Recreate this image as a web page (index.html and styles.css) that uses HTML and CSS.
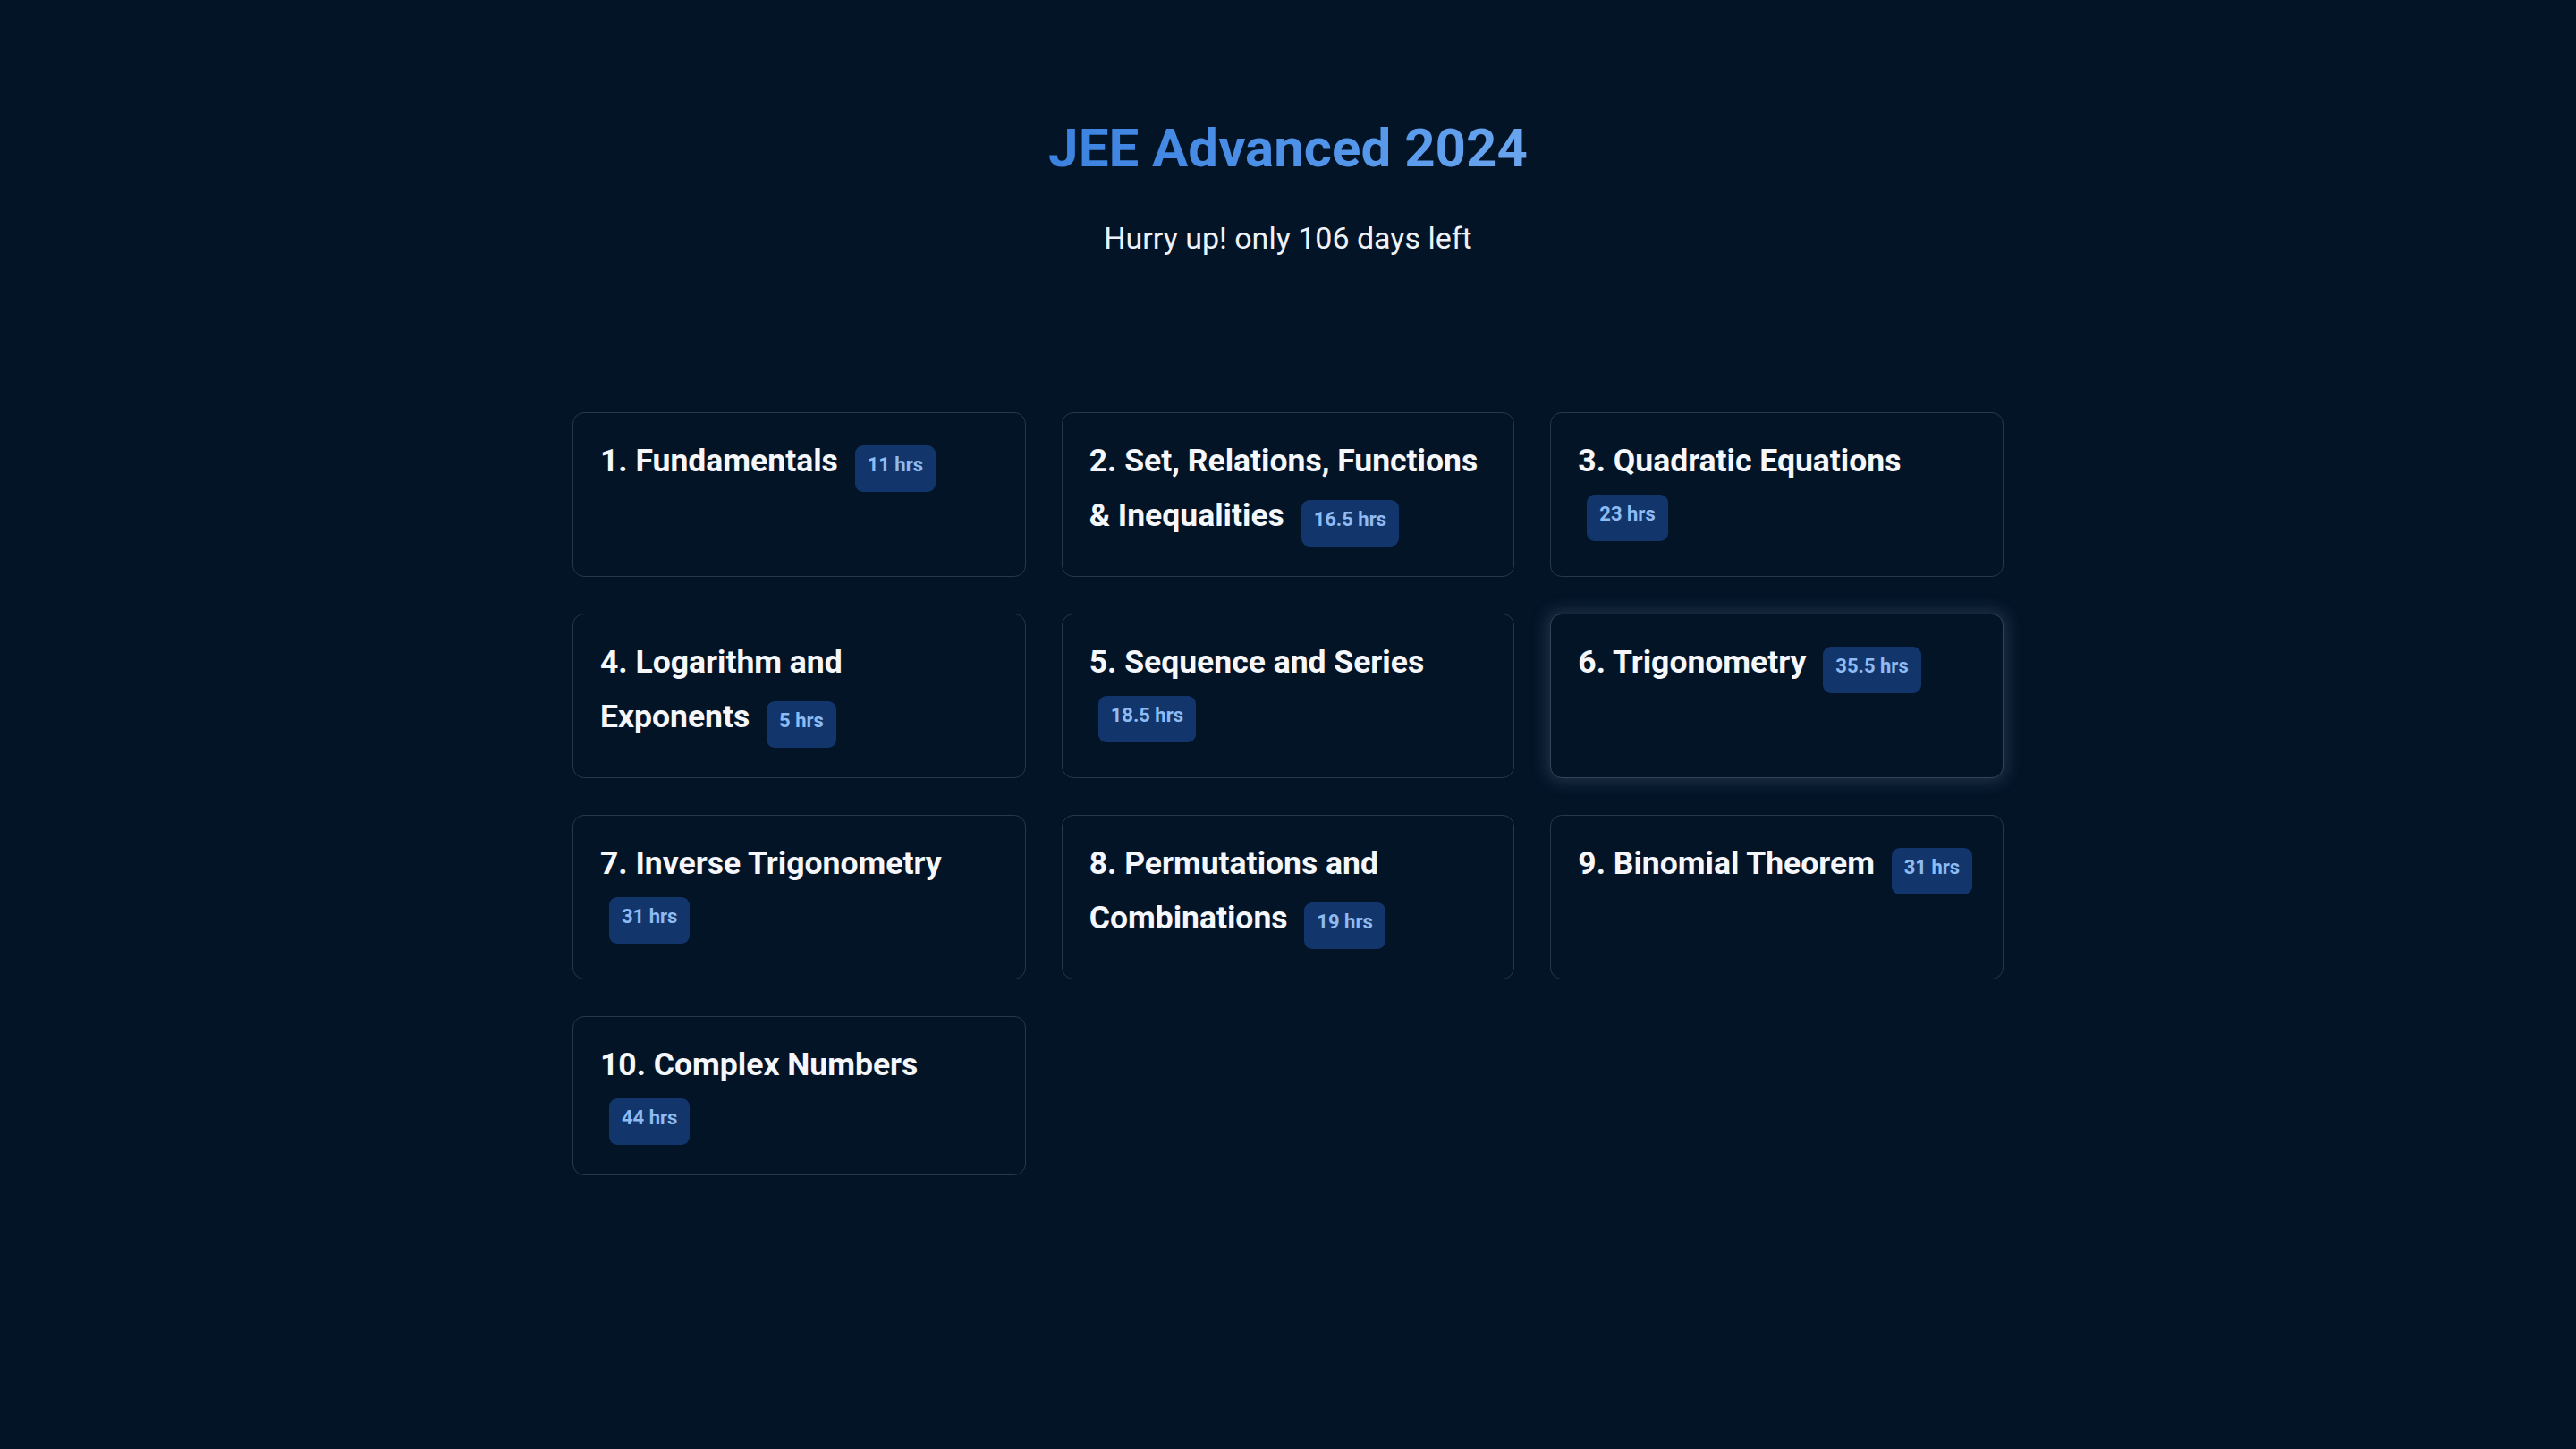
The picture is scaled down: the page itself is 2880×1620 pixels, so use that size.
FILE: index.html
```html
<!DOCTYPE html>
<html lang="en">
<head>
<meta charset="utf-8">
<title>JEE Advanced 2024</title>
<link rel="stylesheet" href="styles.css">
</head>
<body>
<main class="page">
  <header class="hero">
    <h1 class="hero-title">JEE Advanced 2024</h1>
    <p class="hero-sub">Hurry up! only 106 days left</p>
  </header>
  <section class="grid">
    <article class="card"><h3 class="card-title"><span class="name">1. Fundamentals</span> <span class="badge">11 hrs</span></h3></article>
    <article class="card"><h3 class="card-title"><span class="name">2. Set, Relations, Functions &amp; Inequalities</span> <span class="badge">16.5 hrs</span></h3></article>
    <article class="card"><h3 class="card-title"><span class="name">3. Quadratic Equations</span> <span class="badge">23 hrs</span></h3></article>
    <article class="card"><h3 class="card-title"><span class="name">4. Logarithm and Exponents</span> <span class="badge">5 hrs</span></h3></article>
    <article class="card"><h3 class="card-title"><span class="name">5. Sequence and Series</span> <span class="badge">18.5 hrs</span></h3></article>
    <article class="card card-active"><h3 class="card-title"><span class="name">6. Trigonometry</span> <span class="badge">35.5 hrs</span></h3></article>
    <article class="card"><h3 class="card-title"><span class="name">7. Inverse Trigonometry</span> <span class="badge">31 hrs</span></h3></article>
    <article class="card"><h3 class="card-title"><span class="name">8. Permutations and Combinations</span> <span class="badge">19 hrs</span></h3></article>
    <article class="card"><h3 class="card-title"><span class="name">9. Binomial Theorem</span> <span class="badge">31 hrs</span></h3></article>
    <article class="card"><h3 class="card-title"><span class="name">10. Complex Numbers</span> <span class="badge">44 hrs</span></h3></article>
  </section>
</main>
</body>
</html>
```

FILE: styles.css
```css
* { box-sizing: border-box; }

html, body {
  margin: 0;
  padding: 0;
  background: #031427;
  min-height: 100%;
}

body {
  font-family: Roboto, "Noto Sans", "Liberation Sans", sans-serif;
  color: #f4f6fa;
  min-height: 1620px;
}

.page {
  width: 1600px;
  margin: 0 auto;
  padding-top: 130px;
}

.hero {
  text-align: center;
}

.hero-title {
  margin: 0;
  font-size: 60px;
  line-height: 72px;
  font-weight: 700;
  background: linear-gradient(90deg, #3b82e0 0%, #4f92e8 55%, #6aa6ef 100%);
  -webkit-background-clip: text;
  background-clip: text;
  color: transparent;
  display: inline-block;
}

.hero-sub {
  margin: 44px 0 0;
  font-size: 34px;
  line-height: 40px;
  font-weight: 400;
  color: #eef2f8;
}

.grid {
  margin-top: 175px;
  display: grid;
  grid-template-columns: repeat(3, 1fr);
  column-gap: 40px;
  row-gap: 41px;
}

.card {
  border: 1px solid #2a3749;
  border-radius: 13px;
  background: #031427;
  padding: 23px 30px 33px;
}

.card-active {
  border-color: #34435a;
  box-shadow: 0 0 18px 4px rgba(110, 130, 160, 0.28);
}

.card-title {
  margin: 0;
  font-size: 35.5px;
  font-weight: 700;
  line-height: 0;
  color: #f5f7fb;
}

.name {
  line-height: 61px;
}

.badge {
  display: inline-block;
  margin: 7px 0 0 10px;
  padding: 7px 14px 15px;
  height: 52px;
  border-radius: 9px;
  background: #12366b;
  color: #8fbbf3;
  font-size: 22px;
  font-weight: 700;
  line-height: 30px;
  vertical-align: baseline;
}
```
